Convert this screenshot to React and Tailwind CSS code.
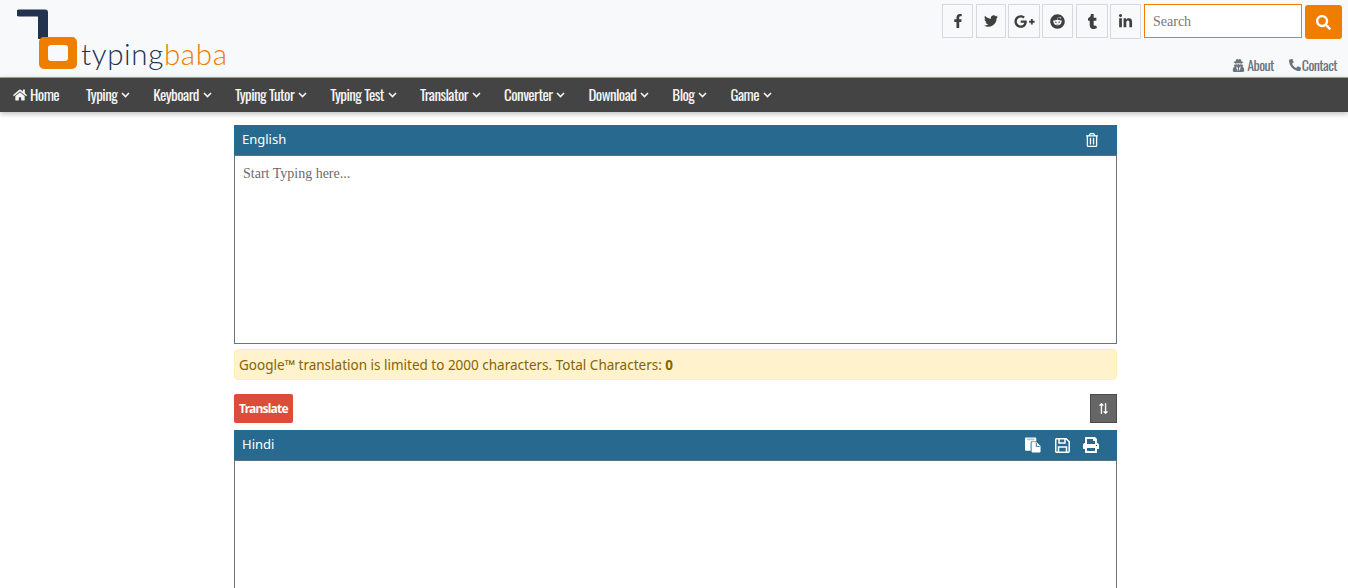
import {
  FaExchangeAlt, FaFacebookF, FaGooglePlusG, FaHome, FaLinkedinIn, FaPhone,
  FaPrint, FaReddit, FaRegTrashAlt, FaSearch, FaTumblr, FaTwitter, FaUserSecret,
} from "react-icons/fa";

const socials = [
  { icon: FaFacebookF, box: "w-[31px] h-[34px]", size: 14 },
  { icon: FaTwitter, box: "ml-[3px] w-[30px] h-[34px]", size: 14 },
  { icon: FaGooglePlusG, box: "ml-[2px] w-[32px] h-[34px]", size: 21 },
  { icon: FaReddit, box: "ml-[2px] w-[31px] h-[34px]", size: 15 },
  { icon: FaTumblr, box: "ml-[3px] w-[32px] h-[34px]", size: 15 },
  { icon: FaLinkedinIn, box: "ml-[2px] w-[31px] h-[35px]", size: 15 },
];

const menu = ["Typing", "Keyboard", "Typing Tutor", "Typing Test", "Translator", "Converter", "Download", "Blog", "Game"];

const condensed = "font-['Oswald','Liberation_Sans_Narrow','Liberation_Sans',sans-serif]";
const slab = "font-['Liberation_Serif',serif]";

const Chevron = () => (
  <svg width="9" height="6" viewBox="0 0 9 6" className="shrink-0">
    <path d="M1 1l3.5 3.5L8 1" fill="none" stroke="currentColor" strokeWidth="1.6" />
  </svg>
);

const PasteIcon = () => (
  <svg width="16" height="16" viewBox="0 0 17 16" className="mr-[1px]">
    <path d="M1 0h10a1 1 0 0 1 1 1v3H7.5A1.5 1.5 0 0 0 6 5.5V14H1a1 1 0 0 1-1-1V1a1 1 0 0 1 1-1z" fill="#fff" />
    <rect x="2" y="1" width="8" height="2" fill="#b9c9d4" />
    <path d="M7.5 5H12l4 4v6.5H7.5z" fill="#fff" stroke="#fff" />
    <path d="M12 5.5V9.5h3.5" fill="none" stroke="#286a8f" />
  </svg>
);

const SaveIcon = () => (
  <svg width="15" height="15" viewBox="0 0 15 15" fill="none" stroke="#fff" strokeWidth="1.5">
    <path d="M1.5 .8h9.7l3 3v9.4a1 1 0 0 1-1 1H1.5a1 1 0 0 1-.8-1V1.8a1 1 0 0 1 .8-1z" />
    <path d="M4 1v4h6V1" />
    <path d="M3.5 14V9h8v5" />
  </svg>
);

const Logo = () => (
  <div className="flex items-end pl-[17px] h-[70px]">
    <svg width="61" height="61" viewBox="0 0 61 61" className="shrink-0">
      <path d="M2 0.5h26a3 3 0 0 1 3 3V30H21V7.5H2a3.5 3.5 0 0 1 0-7z" fill="#22334f" />
      <path d="M27 28h28a5 5 0 0 1 5 5v22a5 5 0 0 1-5 5H27a5 5 0 0 1-5-5V33a5 5 0 0 1 5-5zM34 36a3 3 0 0 0-3 3v10a3 3 0 0 0 3 3h14a3 3 0 0 0 3-3V39a3 3 0 0 0-3-3z" fill="#ee7d00" fillRule="evenodd" />
    </svg>
    <div className="ml-[3px] mb-[-4px] text-[29.5px] leading-[40px] font-light tracking-[0.65px] font-['Lato',sans-serif]">
      <span className="text-[#22334f]">typing</span>
      <span className="text-[#ee7d00]">baba</span>
    </div>
  </div>
);

const PanelHead = ({ title, children }) => (
  <div className="flex items-center justify-between h-[31px] bg-[#286a8f] border-b border-[#5b7083] pl-2 pr-[18px] text-white text-[13px] font-['Noto_Sans',sans-serif]">
    <span className="-mt-[1px]">{title}</span>
    <div className="flex items-center gap-[13px]">{children}</div>
  </div>
);

export default function App() {
  return (
    <div className="h-[588px] overflow-hidden bg-white">
      <header className="flex justify-between h-[77px] bg-[#f8f9fb]">
        <Logo />
        <div className="flex flex-col items-end pr-[6px] pt-1">
          <div className="flex items-start">
            <div className="flex items-start">
              {socials.map((s, i) => {
                const Icon = s.icon;
                return (
                  <div key={i} className={`${s.box} flex items-center justify-center border border-[#d5d8dc] text-[#3f3f3f]`}>
                    <Icon size={s.size} />
                  </div>
                );
              })}
            </div>
            <input
              placeholder="Search"
              className={`ml-[3px] w-[158px] h-[34px] px-2 pt-[1px] bg-white border border-[#ee7d00] text-[14px] outline-none placeholder:text-[#777] ${slab}`}
            />
            <button className="ml-[3px] mt-[1px] w-[37px] h-[34px] flex items-center justify-center rounded-[3px] bg-[#ee7d00] text-white">
              <FaSearch size={15} />
            </button>
          </div>
          <div className={`flex items-center gap-[15px] mt-[16px] pr-[5px] text-[14px] leading-5 tracking-[-0.6px] text-[#6c757d] ${condensed}`}>
            <span className="flex items-center gap-[2px]"><FaUserSecret size={13} />About</span>
            <span className="flex items-center gap-[1px]"><FaPhone size={12} className="scale-x-[-1]" />Contact</span>
          </div>
        </div>
      </header>

      <nav className={`flex items-center h-[35px] pl-[13px] bg-[#444444] border-t border-[#e8825a] shadow-[0_2px_5px_rgba(0,0,0,0.25)] text-[#f4f4f4] text-[15px] tracking-[-0.55px] ${condensed}`}>
        <span className="flex items-center gap-[3px] mr-[27px] -mt-[1px]"><FaHome size={14} />Home</span>
        <div className="flex items-center gap-[23px] -mt-[1px]">
          {menu.map((m) => (
            <span key={m} className="flex items-center gap-[4px]">{m}<Chevron /></span>
          ))}
        </div>
      </nav>

      <main className="w-[883px] ml-[234px] pt-[13px]">
        <PanelHead title="English">
          <FaRegTrashAlt size={14} />
        </PanelHead>
        <div className={`h-[188px] border border-t-0 border-[#6b7280] px-2 pt-[10px] text-[14px] leading-4 text-[#6b6b6b] ${slab}`}>
          Start Typing here...
        </div>
        <div className="flex items-center h-[31px] mt-[5px] px-[4px] pt-[1px] rounded-[4px] bg-[#fff2cc] border border-[#ffeeba] text-[#856404] text-[13.5px] font-['Noto_Sans',sans-serif]">
          <span>Google™ translation is limited to 2000 characters. Total Characters: <b>0</b></span>
        </div>
        <div className="flex items-center justify-between mt-[14px] h-[29px]">
          <button className="w-[59px] h-[29px] rounded-[2px] bg-[#dd4b39] text-white text-[12px] font-bold font-['Noto_Sans',sans-serif] tracking-[-0.75px]">
            Translate
          </button>
          <button className="w-[27px] h-[29px] flex items-center justify-center bg-[#666666] border border-[#4a4a4a] text-white">
            <FaExchangeAlt size={11} className="rotate-90" />
          </button>
        </div>
        <div className="mt-[7px]">
          <PanelHead title="Hindi">
            <PasteIcon />
            <SaveIcon />
            <FaPrint size={16} />
          </PanelHead>
          <div className="h-[300px] border border-t-0 border-[#6b7280]" />
        </div>
      </main>
    </div>
  );
}
